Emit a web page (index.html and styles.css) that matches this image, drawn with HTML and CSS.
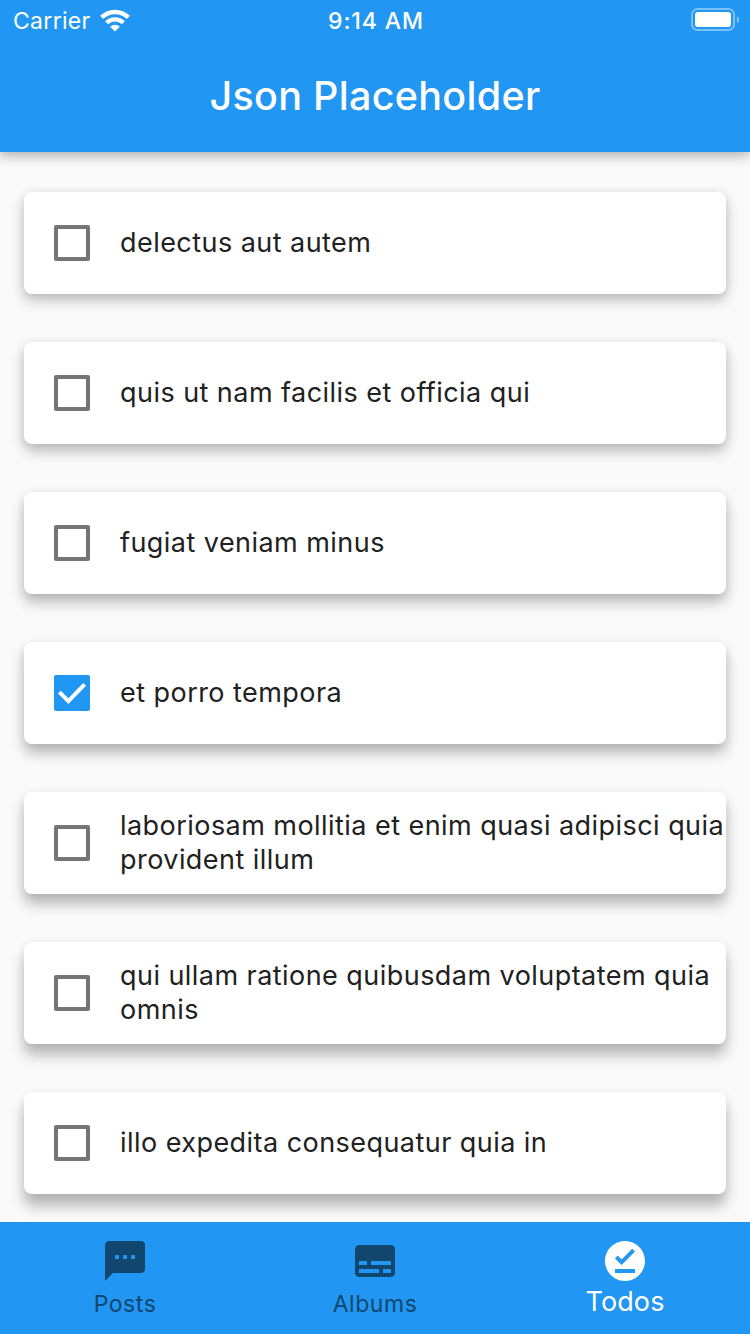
FILE: index.html
```html
<!DOCTYPE html>
<html lang="en">
<head>
<meta charset="utf-8">
<title>Json Placeholder</title>
<link rel="stylesheet" href="styles.css">
</head>
<body>
<div class="app">
  <header class="app-bar">
    <div class="status">
      <div class="network">
        <span class="carrier">Carrier</span>
        <svg class="wifi" width="30" height="23" viewBox="0 0 30 23" fill="none" stroke="#fff">
          <path d="M1.7 8.4A19 19 0 0 1 28.3 8.4" stroke-width="4.5"/>
          <path d="M6.6 13.8A12 12 0 0 1 23.4 13.8" stroke-width="4.3"/>
          <path d="M15 22.5L10.2 17.7A7 7 0 0 1 19.8 17.7Z" fill="#fff" stroke="none"/>
        </svg>
      </div>
      <span class="clock">9:14 AM</span>
      <svg class="battery" width="48" height="24" viewBox="0 0 48 24">
        <rect x="1" y="1" width="42" height="21" rx="5.5" fill="none" stroke="#fff" stroke-opacity=".4" stroke-width="2"/>
        <rect x="4" y="4" width="36" height="15" rx="3" fill="#fff"/>
        <path d="M46 8Q50 11.5 46 15Z" fill="#fff" fill-opacity=".5"/>
      </svg>
    </div>
    <h1 class="title">Json Placeholder</h1>
  </header>
  <main class="list">
    <div class="card s1"><span class="box"></span><span class="text">delectus aut autem</span></div>
    <div class="card s2"><span class="box"></span><span class="text">quis ut nam facilis et officia qui</span></div>
    <div class="card s3"><span class="box"></span><span class="text">fugiat veniam minus</span></div>
    <div class="card s4"><span class="box checked"><svg width="36" height="36" viewBox="0 0 36 36" fill="none" stroke="#fff" stroke-width="4"><path d="M5.4 17.1L14.4 26.1L30.6 9.3"/></svg></span><span class="text">et porro tempora</span></div>
    <div class="card s5"><span class="box"></span><span class="text">laboriosam mollitia et enim quasi adipisci quia<br>provident illum</span></div>
    <div class="card s6"><span class="box"></span><span class="text">qui ullam ratione quibusdam voluptatem quia<br>omnis</span></div>
    <div class="card s7"><span class="box"></span><span class="text">illo expedita consequatur quia in</span></div>
  </main>
  <nav class="tabs">
    <div class="tab">
      <svg class="icon" viewBox="0 0 24 24"><path fill-rule="evenodd" d="M20 2H4c-1.100 0-1.990.9-1.990 2L2 22l4-4h14c1.100 0 2-.9 2-2V4c0-1.100-.9-2-2-2zM9 11H7V9h2v2zm4 0h-2V9h2v2zm4 0h-2V9h2v2z"/></svg>
      <span class="label">Posts</span>
    </div>
    <div class="tab">
      <svg class="icon" viewBox="0 0 24 24"><path fill-rule="evenodd" d="M20 4H4c-1.100 0-2 .9-2 2v12c0 1.100.9 2 2 2h16c1.100 0 2-.9 2-2V6c0-1.100-.9-2-2-2zM4 12h4v2H4v-2zm10 6H4v-2h10v2zm6 0h-4v-2h4v2zm0-4H10v-2h10v2z"/></svg>
      <span class="label">Albums</span>
    </div>
    <div class="tab active">
      <svg class="icon" viewBox="0 0 24 24"><path fill-rule="evenodd" d="M12 2C6.500 2 2 6.500 2 12s4.500 10 10 10 10-4.500 10-10S17.500 2 12 2zm5 16H7v-2h10v2zm-6.700-4L7 10.700l1.400-1.400 1.900 1.900 5.300-5.300L17 7.300 10.300 14z"/></svg>
      <span class="label">Todos</span>
    </div>
  </nav>
</div>
</body>
</html>
```
FILE: styles.css
```css
body {
  margin: 0;
  font-family: Inter, "Liberation Sans", sans-serif;
}

.app {
  display: flex;
  flex-direction: column;
  width: 750px;
  height: 1334px;
  overflow: hidden;
  background: #fafafa;
}

.app-bar {
  flex: none;
  height: 152px;
  background: #2196f3;
  color: #fff;
  box-shadow: 0 4px 12px rgba(0, 0, 0, .25), 0 1px 12px rgba(0, 0, 0, .08);
  z-index: 1;
}

.status {
  display: grid;
  grid-template-columns: 1fr auto 1fr;
  height: 40px;
  padding: 0 11px 0 13px;
  align-items: center;
}

.network {
  display: flex;
  align-items: center;
  gap: 9px;
}

.carrier {
  font-size: 23px;
  letter-spacing: .3px;
  line-height: 28px;
  padding-top: 1px;
}

.clock {
  font-size: 23px;
  font-weight: 550;
  letter-spacing: .9px;
  line-height: 28px;
  padding-top: 1px;
}

.battery {
  justify-self: end;
}

.title {
  margin: 0;
  height: 112px;
  line-height: 112px;
  text-align: center;
  font-size: 39.5px;
  letter-spacing: .3px;
  font-weight: 500;
}

.list {
  flex: 1;
  min-height: 0;
  display: flex;
  flex-direction: column;
  gap: 48px;
  padding: 40px 24px 0;
}

.card {
  flex: none;
  display: flex;
  align-items: center;
  gap: 30px;
  height: 102px;
  padding-left: 30px;
  box-sizing: border-box;
  background: #fff;
  border-radius: 8px;
  box-shadow: 0 var(--drop) 14px rgba(0, 0, 0, var(--shade)), 0 1px 10px rgba(0, 0, 0, .06);
}

.s1 { --drop: 6px; --shade: .25; }
.s2 { --drop: 7px; --shade: .26; }
.s3 { --drop: 8px; --shade: .27; }
.s4 { --drop: 9px; --shade: .27; }
.s5 { --drop: 10px; --shade: .27; }
.s6 { --drop: 11px; --shade: .27; }
.s7 { --drop: 12px; --shade: .27; }

.box {
  flex: none;
  width: 36px;
  height: 36px;
  box-sizing: border-box;
  border: 4px solid #757575;
  border-radius: 2px;
}

.checked {
  border: 0;
  background: #2196f3;
}

.checked svg {
  display: block;
}

.text {
  font-size: 27px;
  line-height: 34px;
  letter-spacing: .45px;
  color: #212121;
  white-space: nowrap;
}

.tabs {
  flex: none;
  display: grid;
  grid-template-columns: repeat(3, 1fr);
  height: 112px;
  background: #2196f3;
  z-index: 1;
}

.tab {
  display: flex;
  flex-direction: column;
  align-items: center;
  padding-top: 15px;
  color: #11466f;
}

.icon {
  width: 48px;
  height: 48px;
  fill: currentColor;
}

.label {
  margin-top: 4px;
  font-size: 23px;
  line-height: 30px;
  letter-spacing: .55px;
}

.active {
  color: #fff;
}

.active .label {
  margin-top: 0;
  font-size: 27px;
  line-height: 34px;
  letter-spacing: .1px;
}
```
